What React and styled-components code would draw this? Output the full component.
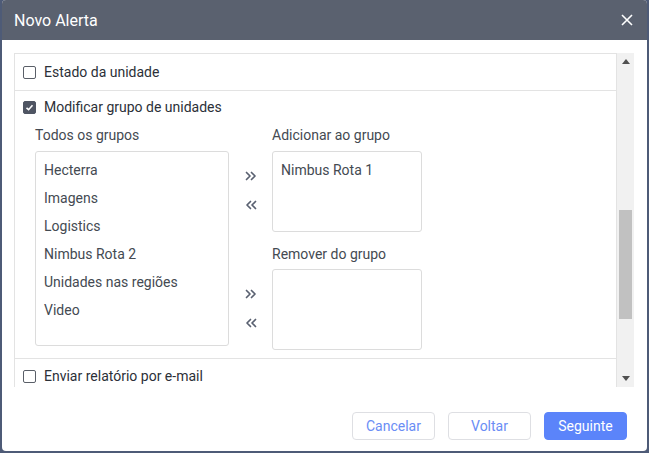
import React from 'react';
import styled, { createGlobalStyle } from 'styled-components';

const GlobalStyle = createGlobalStyle`
  html, body {
    margin: 0;
    padding: 0;
    background: #4e5b77;
    font-family: Roboto, "Liberation Sans", sans-serif;
  }
`;

const Dialog = styled.div`
  margin: 0 2px;
  width: 645px;
  height: 451px;
  background: #fff;
  border-radius: 4px;
  overflow: hidden;
  display: flex;
  flex-direction: column;
`;

const Header = styled.div`
  height: 40px;
  flex: none;
  background: #5a616f;
  display: flex;
  align-items: center;
  justify-content: space-between;
  padding: 0 13px 0 12px;
  color: #fff;
  font-size: 16px;
`;

const CloseBtn = styled.button`
  border: none;
  background: none;
  padding: 0;
  width: 14px;
  height: 14px;
  display: flex;
  align-items: center;
  justify-content: center;
  cursor: pointer;
`;

const Body = styled.div`
  padding: 13px 13px 0 12px;
`;

const ScrollFrame = styled.div`
  height: 334px;
  display: flex;
  overflow: hidden;
`;

const List = styled.div`
  flex: 1;
  border: 1px solid #e3e3e3;
  border-bottom: none;
  overflow: hidden;
`;

const Section = styled.div`
  border-bottom: 1px solid #e3e3e3;
  padding: ${p => p.$pad || '8px'};
`;

const CheckLine = styled.label`
  display: flex;
  align-items: center;
  gap: 8px;
  height: 20px;
  font-size: 14px;
  color: #2c3038;
`;

const Box = styled.span`
  width: 13px;
  height: 13px;
  box-sizing: border-box;
  border-radius: 2px;
  border: 1px solid ${p => (p.$checked ? '#4f5563' : '#5a5f68')};
  background: ${p => (p.$checked ? '#4f5563' : '#fff')};
  display: flex;
  align-items: center;
  justify-content: center;
`;

const Groups = styled.div`
  display: grid;
  grid-template-columns: 194px 43px 150px;
  grid-template-rows: 26px 81px 37px 81px;
  margin: 8px 0 0 12px;
`;

const Label = styled.div`
  font-size: 14px;
  color: #444a52;
  line-height: 20px;
  align-self: ${p => (p.$end ? 'end' : 'start')};
  margin-bottom: ${p => (p.$end ? '5px' : '0')};
  grid-column: ${p => p.$col};
  grid-row: ${p => p.$row};
`;

const ListBox = styled.div`
  border: 1px solid #dcdcdc;
  border-radius: 3px;
  box-sizing: border-box;
  padding: 4px 8px;
  grid-column: ${p => p.$col};
  grid-row: ${p => p.$row};
  height: ${p => p.$h || 81}px;
`;

const Item = styled.div`
  font-size: 14px;
  color: #444a52;
  line-height: 28px;
`;

const Arrows = styled.div`
  grid-column: 2;
  grid-row: ${p => p.$row};
  display: flex;
  flex-direction: column;
  align-items: center;
  justify-content: center;
  gap: 19px;
  padding-bottom: 2px;
`;

const ScrollBar = styled.div`
  width: 17px;
  background: #f1f1f1;
  display: flex;
  flex-direction: column;
  align-items: center;
`;

const ScrollBtn = styled.div`
  height: 17px;
  display: flex;
  align-items: center;
  justify-content: center;
`;

const Thumb = styled.div`
  width: 13px;
  height: 109px;
  background: #c1c1c1;
  margin-top: 140px;
`;

const Footer = styled.div`
  flex: 1;
  display: flex;
  justify-content: flex-end;
  align-items: flex-start;
  gap: 13px;
  padding: 25px 20px 0 0;
`;

const Button = styled.button`
  width: 83px;
  height: 28px;
  border-radius: 4px;
  font-family: Roboto, "Liberation Sans", sans-serif;
  font-size: 14px;
  cursor: pointer;
  border: 1px solid ${p => (p.$primary ? '#5b84fa' : '#dedfe3')};
  background: ${p => (p.$primary ? '#5b84fa' : '#fff')};
  color: ${p => (p.$primary ? '#fff' : '#6a8df5')};
`;

const Chevrons = ({ dir }) => (
  <svg width="12" height="10" viewBox="0 0 12 10">
    <g fill="none" stroke="#5a6171" strokeWidth="1.7" strokeLinecap="round" strokeLinejoin="round">
      {dir === 'right' ? (
        <>
          <path d="M1.5 1.5 L5 5 L1.5 8.5" />
          <path d="M6.5 1.5 L10 5 L6.5 8.5" />
        </>
      ) : (
        <>
          <path d="M5.5 1.5 L2 5 L5.5 8.5" />
          <path d="M10.5 1.5 L7 5 L10.5 8.5" />
        </>
      )}
    </g>
  </svg>
);

const Check = ({ checked }) => (
  <Box $checked={checked}>
    {checked && (
      <svg width="9" height="9" viewBox="0 0 9 9">
        <path d="M1.5 4.8 L3.6 6.7 L7.5 2.3" fill="none" stroke="#fff" strokeWidth="1.6" />
      </svg>
    )}
  </Box>
);

const groups = ['Hecterra', 'Imagens', 'Logistics', 'Nimbus Rota 2', 'Unidades nas regiões', 'Video'];

const App = () => (
  <>
    <GlobalStyle />
    <Dialog>
      <Header>
        <span>Novo Alerta</span>
        <CloseBtn>
          <svg width="12" height="12" viewBox="0 0 12 12">
            <path d="M1 1 L11 11 M11 1 L1 11" stroke="#fff" strokeWidth="1.6" />
          </svg>
        </CloseBtn>
      </Header>
      <Body>
        <ScrollFrame>
          <List>
            <Section>
              <CheckLine><Check />Estado da unidade</CheckLine>
            </Section>
            <Section $pad="6px 8px 8px 8px">
              <CheckLine><Check checked />Modificar grupo de unidades</CheckLine>
              <Groups>
                <Label $col={1} $row={1}>Todos os grupos</Label>
                <Label $col={3} $row={1}>Adicionar ao grupo</Label>
                <ListBox $col={1} $row="2 / 5" $h={195} style={{ alignSelf: 'start' }}>
                  {groups.map(g => <Item key={g}>{g}</Item>)}
                </ListBox>
                <Arrows $row={2}>
                  <Chevrons dir="right" />
                  <Chevrons dir="left" />
                </Arrows>
                <ListBox $col={3} $row={2}>
                  <Item>Nimbus Rota 1</Item>
                </ListBox>
                <Label $col={3} $row={3} $end>Remover do grupo</Label>
                <Arrows $row={4}>
                  <Chevrons dir="right" />
                  <Chevrons dir="left" />
                </Arrows>
                <ListBox $col={3} $row={4} />
              </Groups>
            </Section>
            <Section $pad="7px 8px 8px 8px">
              <CheckLine><Check />Enviar relatório por e-mail</CheckLine>
            </Section>
          </List>
          <ScrollBar>
            <ScrollBtn>
              <svg width="8" height="5" viewBox="0 0 8 5"><path d="M0 5 L4 0 L8 5 Z" fill="#505050" /></svg>
            </ScrollBtn>
            <Thumb />
            <div style={{ flex: 1 }} />
            <ScrollBtn>
              <svg width="8" height="5" viewBox="0 0 8 5"><path d="M0 0 L8 0 L4 5 Z" fill="#505050" /></svg>
            </ScrollBtn>
          </ScrollBar>
        </ScrollFrame>
      </Body>
      <Footer>
        <Button>Cancelar</Button>
        <Button>Voltar</Button>
        <Button $primary>Seguinte</Button>
      </Footer>
    </Dialog>
  </>
);

export default App;
